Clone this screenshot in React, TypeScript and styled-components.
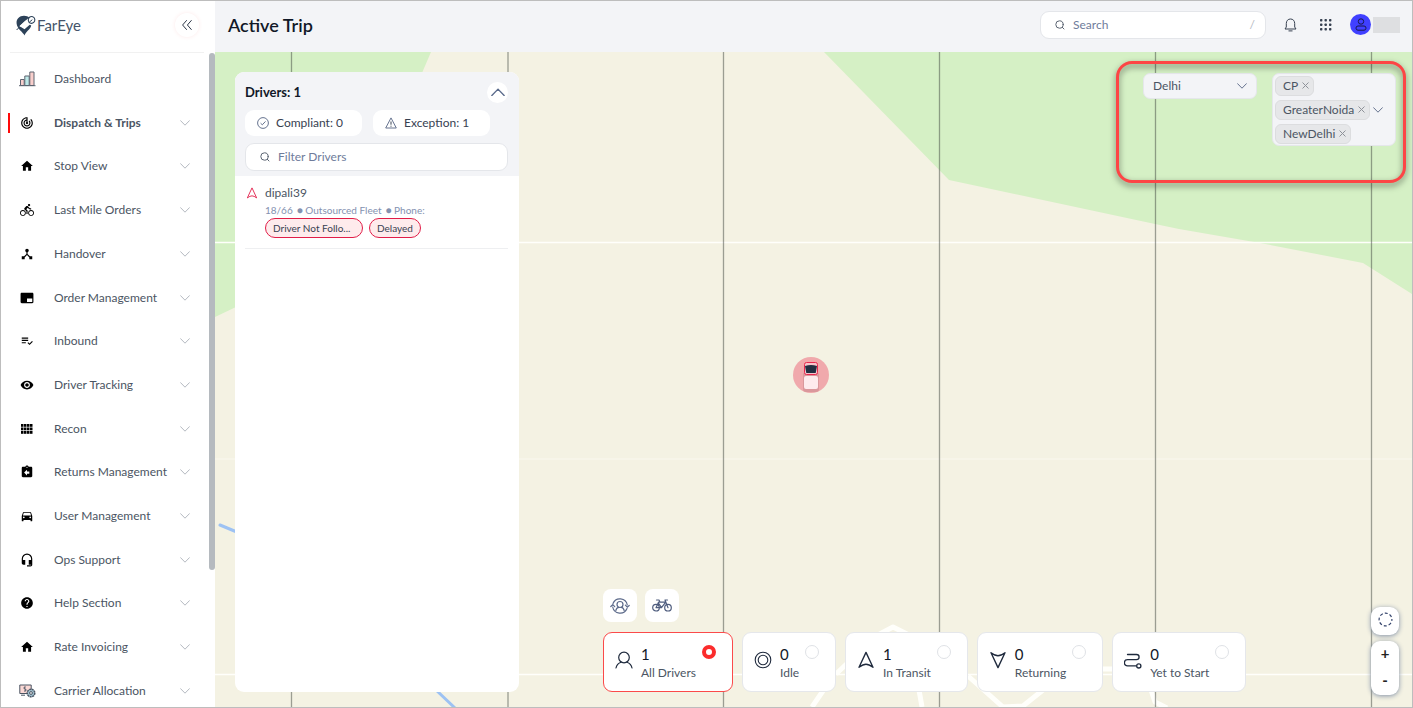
import React from "react";
import styled, { createGlobalStyle, css } from "styled-components";
import {
  MdTrackChanges,
  MdHome,
  MdDirectionsBike,
  MdDeviceHub,
  MdBrandingWatermark,
  MdPlaylistAddCheck,
  MdVisibility,
  MdAssignmentReturn,
  MdDirectionsCar,
  MdHeadsetMic,
  MdHelp,
} from "react-icons/md";

const GlobalStyle = createGlobalStyle`
  *, *::before, *::after { box-sizing: border-box; }
  body { margin: 0; }
  body, button, input, select {
    font-family: Lato, "Liberation Sans", sans-serif;
    font-size: 12px;
    line-height: 16px;
    color: #4b5563;
  }
  button { padding: 0; border: 0; background: none; cursor: pointer; }
  ul { margin: 0; padding: 0; list-style: none; }
  h1, h2, p { margin: 0; }
  svg { display: block; flex: none; }
`;

const Shell = styled.div`
  display: flex;
  height: 100vh;
  border: 1px solid #bdbdbd;
  overflow: hidden;
  background: #fff;
`;

/* Sidebar */

const Sidebar = styled.aside`
  flex: none;
  width: 214px;
  display: flex;
  flex-direction: column;
`;

const SidebarHead = styled.div`
  display: flex;
  align-items: center;
  justify-content: space-between;
  height: 52px;
  margin: 0 11px 0 9px;
  padding: 0 5px 3px 6px;
  border-bottom: 1px solid #f1f1f1;
`;

const Logo = styled.a`
  display: flex;
  align-items: center;
  gap: 1px;
  color: #44546a;
  text-decoration: none;
  font-size: 15px;
`;

const CollapseButton = styled.button`
  display: grid;
  place-items: center;
  width: 24px;
  height: 24px;
  border-radius: 50%;
  background: #fff;
  box-shadow: 0 0 4px #fdeaea;
`;

const SidebarBody = styled.nav`
  flex: 1;
  min-height: 0;
  display: flex;
`;

const MenuList = styled.ul`
  flex: 1;
  display: flex;
  flex-direction: column;
  justify-content: space-between;
  padding: 16px 0 6px 7px;
`;

const MenuLink = styled.a<{ $active?: boolean }>`
  display: grid;
  grid-template-columns: 35px 1fr 10px;
  align-items: center;
  height: 20px;
  padding: 0 19px 0 9px;
  border-left: 2px solid ${(p) => (p.$active ? "#ff0a0a" : "transparent")};
  color: #4b5563;
  font-weight: ${(p) => (p.$active ? 700 : 400)};
  text-decoration: none;
  white-space: nowrap;
`;

const MenuIcon = styled.span`
  display: flex;
  justify-content: center;
  width: 16px;
  color: #000;
  font-size: 14px;
`;

const ScrollThumb = styled.div`
  width: 6px;
  height: 79%;
  border-radius: 3px;
  background: #b5babf;
`;

/* Top bar */

const Main = styled.main`
  flex: 1;
  min-width: 0;
  display: flex;
  flex-direction: column;
`;

const TopBar = styled.header`
  display: flex;
  align-items: center;
  height: 51px;
  padding: 0 12px 4px 13px;
  background: #f3f4f7;
`;

const PageTitle = styled.h1`
  flex: 1;
  font-size: 18px;
  line-height: 24px;
  font-weight: 600;
  color: #111827;
`;

const SearchBox = styled.label<{ $fill?: boolean }>`
  display: flex;
  align-items: center;
  gap: 8px;
  width: ${(p) => (p.$fill ? "100%" : "226px")};
  height: 28px;
  padding: 0 10px 0 14px;
  border: 1px solid #e4e6ea;
  border-radius: 9px;
  background: #fff;
  color: #b4b9c2;

  input {
    flex: 1;
    min-width: 0;
    padding: 0;
    border: 0;
    outline: 0;
    background: none;
  }
  input::placeholder { color: #6f7c9b; opacity: 1; }
`;

const BarButton = styled.button<{ $gap: number }>`
  display: grid;
  place-items: center;
  width: 16px;
  height: 20px;
  margin-left: ${(p) => p.$gap}px;
`;

const Account = styled.button`
  display: flex;
  align-items: center;
  gap: 2px;
  margin-left: 16px;
`;

const Avatar = styled.span`
  display: grid;
  place-items: center;
  width: 21px;
  height: 21px;
  border-radius: 50%;
  background: #4040ff;
`;

const AccountName = styled.span`
  width: 27px;
  height: 16px;
  background: #dedfe1;
`;

/* Map */

const MapArea = styled.section`
  position: relative;
  flex: 1;
  min-height: 0;
  display: flex;
  padding: 20px 0 15px 20px;
  background: #f4f2e3;
`;

const MapCanvas = styled.svg`
  position: absolute;
  inset: 0;
  width: 100%;
  height: 100%;
`;

const DriverPanel = styled.section`
  position: relative;
  flex: none;
  width: 284px;
  border-radius: 9px;
  background: #fff;
  overflow: hidden;
`;

const PanelHead = styled.div`
  padding: 9px 11px 5px 10px;
  background: #f3f4f7;
`;

const PanelTitleRow = styled.div`
  display: flex;
  align-items: center;
  justify-content: space-between;
  height: 22px;
`;

const PanelTitle = styled.h2`
  font-size: 13px;
  line-height: 16px;
  font-weight: 700;
  color: #111827;
`;

const RoundButton = styled.button`
  display: grid;
  place-items: center;
  width: 21px;
  height: 21px;
  border-radius: 50%;
  background: #fff;
`;

const ChipRow = styled.div`
  display: flex;
  gap: 11px;
  padding: 7px 0;
`;

const StatusChip = styled.button`
  display: flex;
  align-items: center;
  gap: 7px;
  width: 117px;
  height: 26px;
  padding: 0 12px;
  border-radius: 9px;
  background: #fff;
  color: #374151;
`;

const DriverItem = styled.li`
  display: grid;
  grid-template-columns: 20px 1fr;
  margin: 0 11px 0 10px;
  padding: 8px 0 10px;
  border-bottom: 1px solid #eeeff1;

  > svg { margin: 3px 0 0 1px; }
`;

const DriverName = styled.p`
  line-height: 18px;
`;

const DriverMeta = styled.p`
  display: flex;
  gap: 4px;
  font-size: 10px;
  line-height: 16px;
  color: #8391b0;
`;

const BadgeRow = styled.div`
  display: flex;
  gap: 6px;
`;

const Badge = styled.span<{ $long?: boolean }>`
  min-width: ${(p) => (p.$long ? "98px" : "0")};
  height: 20px;
  padding: 0 7px;
  border: 1px solid #e11d48;
  border-radius: 10px;
  background: #feebec;
  color: #374151;
  font-size: 10px;
  line-height: 18px;
  white-space: nowrap;
`;

const FleetBar = styled.div`
  position: relative;
  display: flex;
  flex-direction: column;
  justify-content: flex-end;
  gap: 10px;
  margin-left: 84px;
`;

const ModeRow = styled.div`
  display: flex;
  gap: 8px;
`;

const ModeButton = styled.button`
  display: grid;
  place-items: center;
  width: 34px;
  height: 33px;
  border-radius: 8px;
  background: #fff;
`;

const StatRow = styled.div`
  display: flex;
  gap: 9px;
`;

const StatCard = styled.label<{ $active?: boolean }>`
  display: flex;
  align-items: center;
  height: 60px;
  padding: 0 16px 0 11px;
  border: 1px solid ${(p) => (p.$active ? "#fb4a4a" : "#e5e7eb")};
  border-radius: 9px;
  background: #fff;
  white-space: nowrap;

  > svg { margin: 0 8px 4px 0; }
`;

const StatText = styled.span`
  display: flex;
  flex-direction: column;
  margin-right: 6px;
  padding-top: 2px;
  line-height: 18px;
`;

const StatCount = styled.span`
  font-size: 15px;
  line-height: 20px;
  color: #111827;
`;

const StatRadio = styled.input`
  appearance: none;
  align-self: flex-start;
  width: 14px;
  height: 14px;
  margin: 12px 0 0;
  border: 1px solid #dfe2e6;
  border-radius: 50%;
  background: #fff;

  &:checked { border: 4px solid #fb2c2c; }
`;

const floating = css`
  border-radius: 9px;
  background: #fff;
  box-shadow: 0 1px 5px #8492a8;
`;

const MapControls = styled.div`
  position: absolute;
  right: 13px;
  bottom: 12px;
  display: flex;
  flex-direction: column;
  gap: 6px;
  width: 28px;
`;

const LocateButton = styled.button`
  ${floating}
  display: grid;
  place-items: center;
  height: 28px;
  padding-bottom: 3px;
`;

const ZoomGroup = styled.div`
  ${floating}
  display: grid;
  grid-template-rows: 1fr 1fr;
  height: 54px;

  button { padding-bottom: 4px; font-size: 15px; color: #222; font-weight: 700; }
`;

const FilterBar = styled.div`
  position: absolute;
  top: 21px;
  right: 16px;
  display: flex;
  align-items: flex-start;
  gap: 15px;
`;

const CitySelect = styled.div`
  display: grid;
  align-items: center;
  width: 114px;
  height: 26px;
  border: 1px solid #e5e7eb;
  border-radius: 7px;
  background: #f3f4f7;

  > * { grid-area: 1 / 1; }
  svg { justify-self: end; margin-right: 9px; pointer-events: none; }
  select {
    appearance: none;
    width: 100%;
    height: 100%;
    padding: 0 9px;
    border: 0;
    background: none;
  }
`;

const HubSelect = styled.div`
  display: flex;
  align-items: center;
  gap: 3px;
  width: 124px;
  height: 73px;
  padding: 0 2px;
  border: 1px solid #e5e7eb;
  border-radius: 7px;
  background: #f3f4f7;
`;

const TagList = styled.ul`
  display: grid;
  justify-items: start;
  gap: 4px;
`;

const Tag = styled.li`
  display: flex;
  align-items: center;
  gap: 4px;
  height: 20px;
  padding: 0 4px 0 7px;
  border: 1px solid #dcdddf;
  border-radius: 6px;
  background: #e6e7e9;
`;

const Highlight = styled.div`
  position: absolute;
  top: 9px;
  right: 6px;
  width: 290px;
  height: 122px;
  border: 3px solid #fd4545;
  border-radius: 16px;
  filter: drop-shadow(0 3px 3px #0008);
  pointer-events: none;
`;

/* Small line icons */

const Chevron = ({ up, size = 10, color = "#b4b9c0" }: { up?: boolean; size?: number; color?: string }) => (
  <svg width={size} height={size * 0.6} viewBox="0 0 10 6" fill="none" stroke={color} strokeLinecap="round" strokeLinejoin="round">
    <path d={up ? "M.6 5.3 5 .8l4.4 4.5" : "M.6.7 5 5.2 9.4.7"} />
  </svg>
);

const SearchIcon = () => (
  <svg width="10" height="10" viewBox="0 0 10 10" fill="none" stroke="#5b6472" strokeLinecap="round">
    <circle cx="4.5" cy="4.5" r="3.7" />
    <path d="M7.3 7.3 9 9" />
  </svg>
);

const ArrowIcon = ({ size, color, down }: { size: number; color: string; down?: boolean }) => (
  <svg width={size} height={size} viewBox="0 0 16 16" fill="none" stroke={color} strokeWidth="1.2" strokeLinejoin="round">
    {down ? (
      <path d="M8 14.8 1.800 1.500Q5.500 4.200 8 4.200T14.200 1.500z" />
    ) : (
      <path d="M8 1.200 1.800 14.500Q5.500 11.800 8 11.800T14.200 14.500z" />
    )}
  </svg>
);

const CrossIcon = () => (
  <svg width="7" height="7" viewBox="0 0 7 7" fill="none" stroke="#8e9299">
    <path d="M.5.5l6 6M6.5.5l-6 6" />
  </svg>
);

const LogoMark = () => (
  <svg width="20" height="21" viewBox="0 0 20 21">
    <path d="M8.500 20.500C7.500 17.500 1 14 .6 8.500.2 4 3.500.8 8 .8c2.500 0 4 .7 5.200 1.800l-4.700 4L3.500 11l5 3.300 5.200-4.500 1.500.8C14.500 14.500 9.500 17 8.500 20.500z" fill="#2d4259" />
    <path d="M13.500 2.200c2-1.600 5-.4 5.300 2.200.3 2.400-1.800 4.400-4.100 3.900-2.600-.5-3.300-4.400-1.200-6.100z" fill="#fff" stroke="#2d4259" strokeWidth="1.100" />
    <path d="M3.500 11.300 9.700 5.500l3 3.300-4.200 4.500z" fill="#fff" />
    <path d="M.6 15l3-3M13.500 7l2.800-2.300" stroke="#2d4259" fill="none" />
  </svg>
);

const DashboardIcon = () => (
  <svg width="17" height="16" viewBox="0 0 17 16" stroke="#5d6470">
    <path d="M1.5 8.500h3.700v6H1.500z" fill="#f9cfcc" />
    <path d="M5.800 5h4.400v9.500H5.800z" fill="#bfe9e8" />
    <path d="M10.800 1h4.200v13.500h-4.200z" fill="#f9cfcc" />
    <path d="M0 14.700h16.500" />
  </svg>
);

const GridIcon = () => (
  <svg width="12" height="10" viewBox="0 0 12 10" fill="#000">
    {[0, 3.5, 7].map((y) => [0, 3, 6, 9].map((x) => <rect key={`${x}-${y}`} x={x} y={y} width="2.500" height="2.800" />))}
  </svg>
);

const CarrierIcon = () => (
  <svg width="17" height="14" viewBox="0 0 17 14" fill="none" stroke="#4b5563">
    <path d="M.8 1h11.400v8.500H.8z" fill="#fbd9d5" />
    <path d="M6.800 3H5.200v2h1.600v2H5M2 11.200h4" />
    <circle cx="12" cy="9" r="3.800" fill="#9fc0cf" strokeWidth="1.500" strokeDasharray="2 .6" />
    <circle cx="12" cy="9" r="1.400" fill="#fff" />
  </svg>
);

type MenuEntry = { label: string; icon: React.ReactNode; active?: boolean; leaf?: boolean };

const menu: MenuEntry[] = [
  { label: "Dashboard", icon: <DashboardIcon />, leaf: true },
  { label: "Dispatch & Trips", icon: <MdTrackChanges />, active: true },
  { label: "Stop View", icon: <MdHome /> },
  { label: "Last Mile Orders", icon: <MdDirectionsBike /> },
  { label: "Handover", icon: <MdDeviceHub /> },
  { label: "Order Management", icon: <MdBrandingWatermark /> },
  { label: "Inbound", icon: <MdPlaylistAddCheck /> },
  { label: "Driver Tracking", icon: <MdVisibility /> },
  { label: "Recon", icon: <GridIcon /> },
  { label: "Returns Management", icon: <MdAssignmentReturn /> },
  { label: "User Management", icon: <MdDirectionsCar /> },
  { label: "Ops Support", icon: <MdHeadsetMic /> },
  { label: "Help Section", icon: <MdHelp /> },
  { label: "Rate Invoicing", icon: <MdHome /> },
  { label: "Carrier Allocation", icon: <CarrierIcon /> },
];

const ink = "#1f2a3d";

const stats = [
  {
    label: "All Drivers",
    count: 1,
    icon: (
      <svg width="18" height="18" viewBox="0 0 18 18" fill="none" stroke={ink} strokeWidth="1.2" strokeLinecap="round">
        <circle cx="9" cy="6.5" r="5.3" />
        <path d="M1 17c.6-3 2.400-5 5-5.800M17 17c-.6-3-2.400-5-5-5.800" />
      </svg>
    ),
  },
  {
    label: "Idle",
    count: 0,
    icon: (
      <svg width="18" height="18" viewBox="0 0 18 18" fill="none" stroke={ink} strokeWidth="1.1">
        <circle cx="9" cy="9" r="7.8" />
        <circle cx="9" cy="9" r="4.8" />
      </svg>
    ),
  },
  { label: "In Transit", count: 1, icon: <ArrowIcon size={18} color={ink} /> },
  { label: "Returning", count: 0, icon: <ArrowIcon size={18} color={ink} down /> },
  {
    label: "Yet to Start",
    count: 0,
    icon: (
      <svg width="18" height="18" viewBox="0 0 18 18" fill="none" stroke={ink} strokeWidth="1.3" strokeLinecap="round">
        <path d="M3.500 3.500h9a2.600 2.600 0 0 1 0 5.200h-9a3.100 3.100 0 0 0 0 6.200h8.700" />
        <circle cx="14.800" cy="14.900" r="2.100" />
      </svg>
    ),
  },
];

const meridians = [291.5, 508, 723.5, 939.5, 1155.5, 1371.5];

function MapDrawing() {
  return (
    <MapCanvas viewBox="215 52 1197 655" preserveAspectRatio="xMinYMin slice" aria-hidden="true">
      <path d="M215 52h216l-12 28-183 227-21 10z" fill="#d5f0c5" />
      <path d="M824 52 949 180 1155 224 1179 229 1260 243 1363 263 1412 294V52z" fill="#d5f0c5" />
      <g stroke="#fffffb" fill="none">
        <path d="M215 242.500h1197M215 674.500h1197" strokeWidth="1.500" />
        <path d="M215 459h1197" opacity=".5" />
        <path
          d="M812 707l15-22M836 674l40-38 17-9 24 12M919 690l3 17M968 676l35 31 20-1 20-16M1100 669h20M1151 690l4 12 12 6"
          strokeWidth="5"
          strokeLinejoin="round"
        />
      </g>
      <g fill="none" stroke="#9dc2f3" strokeWidth="3" strokeLinecap="round">
        <path d="M220 525l24 10M436 690l19 18" />
      </g>
      <g stroke="#414741" strokeOpacity=".5" strokeWidth="1.3">
        {meridians.map((x) => (
          <path key={x} d={`M${x} 52v655`} />
        ))}
      </g>
      <circle cx="811" cy="375" r="18" fill="#f0a9ac" />
      <rect x="803" y="372" width="16" height="20" rx="3" fill="#c98a90" opacity=".55" />
      <rect x="804" y="376" width="14" height="13" rx="2" fill="#feebed" />
      <rect x="804.500" y="362.500" width="13" height="12" rx="2" fill="#f6c4cb" stroke="#e8284f" />
      <path d="M805 366q6-2 12 0l-1.300 7h-9.400z" fill="#232f42" />
    </MapCanvas>
  );
}

export default function App() {
  return (
    <>
      <GlobalStyle />
      <Shell>
        <Sidebar>
          <SidebarHead>
            <Logo href="#">
              <LogoMark />
              FarEye
            </Logo>
            <CollapseButton aria-label="Collapse menu">
              <svg width="10" height="10" viewBox="0 0 10 10" fill="none" stroke="#2d3748" strokeLinecap="round" strokeLinejoin="round">
                <path d="M4.500.5.600 5l3.900 4.500M9.300.5 5.400 5l3.900 4.500" />
              </svg>
            </CollapseButton>
          </SidebarHead>
          <SidebarBody aria-label="Main menu">
            <MenuList>
              {menu.map((item) => (
                <li key={item.label}>
                  <MenuLink href="#" $active={item.active}>
                    <MenuIcon>{item.icon}</MenuIcon>
                    <span>{item.label}</span>
                    {!item.leaf && <Chevron />}
                  </MenuLink>
                </li>
              ))}
            </MenuList>
            <ScrollThumb />
          </SidebarBody>
        </Sidebar>

        <Main>
          <TopBar>
            <PageTitle>Active Trip</PageTitle>
            <SearchBox>
              <SearchIcon />
              <input type="text" placeholder="Search" aria-label="Search" />
              /
            </SearchBox>
            <BarButton $gap={16} aria-label="Notifications">
              <svg width="13" height="14" viewBox="0 0 13 14" fill="none" stroke="#374151" strokeLinejoin="round">
                <path d="M1 11h11l-1.300-2V5.500C10.700 2.800 9 1 6.500 1S2.300 2.800 2.300 5.500V9zM4.500 12.900h4" />
              </svg>
            </BarButton>
            <BarButton $gap={20} aria-label="Apps">
              <svg width="12" height="12" viewBox="0 0 12 12" fill="#374151">
                {[0, 4.5, 9].map((y) => [0, 4.5, 9].map((x) => <rect key={`${x}-${y}`} x={x} y={y} width="2.400" height="2.400" rx=".7" />))}
              </svg>
            </BarButton>
            <Account aria-label="Account">
              <Avatar>
                <svg width="12" height="13" viewBox="0 0 12 13" fill="none" stroke="#17174f">
                  <circle cx="6" cy="3.500" r="2.700" />
                  <rect x="1" y="8" width="10" height="4.200" rx="2" />
                </svg>
              </Avatar>
              <AccountName />
            </Account>
          </TopBar>

          <MapArea>
            <MapDrawing />
            <DriverPanel>
              <PanelHead>
                <PanelTitleRow>
                  <PanelTitle>Drivers: 1</PanelTitle>
                  <RoundButton aria-label="Collapse drivers">
                    <Chevron up size={14} color="#5b6b8c" />
                  </RoundButton>
                </PanelTitleRow>
                <ChipRow>
                  <StatusChip>
                    <svg width="12" height="12" viewBox="0 0 12 12" fill="none" stroke="#66738f">
                      <circle cx="6" cy="6" r="5.400" />
                      <path d="M3.600 6.200l1.700 1.600 3.200-3.400" />
                    </svg>
                    Compliant: 0
                  </StatusChip>
                  <StatusChip>
                    <svg width="12" height="12" viewBox="0 0 12 12" fill="none" stroke="#66738f" strokeLinejoin="round">
                      <path d="M6 .9.7 11h10.600z" />
                      <path d="M6 4.500v3.200M6 8.700v1" stroke="#374151" />
                    </svg>
                    Exception: 1
                  </StatusChip>
                </ChipRow>
                <SearchBox $fill>
                  <SearchIcon />
                  <input type="text" placeholder="Filter Drivers" aria-label="Filter Drivers" />
                </SearchBox>
              </PanelHead>
              <ul>
                <DriverItem>
                  <ArrowIcon size={12} color="#e11d48" />
                  <div>
                    <DriverName>dipali39</DriverName>
                    <DriverMeta>
                      <span>18/66</span>
                      <span>● Outsourced Fleet</span>
                      <span>● Phone:</span>
                    </DriverMeta>
                    <BadgeRow>
                      <Badge $long>Driver Not Follo...</Badge>
                      <Badge>Delayed</Badge>
                    </BadgeRow>
                  </div>
                </DriverItem>
              </ul>
            </DriverPanel>

            <FleetBar>
              <ModeRow>
                <ModeButton aria-label="Reassign driver">
                  <svg width="20" height="18" viewBox="0 0 20 18" fill="none" stroke="#5c6a8a" strokeWidth="1.200" strokeLinecap="round">
                    <path d="M3 6.500A7.500 7.500 0 0 1 17.300 8M17 11.500A7.500 7.500 0 0 1 2.700 10M.8 9.500l2-1.800 1.900 2M15.400 8.200l1.900 2 1.900-1.700" />
                    <circle cx="10" cy="7.500" r="3" />
                    <path d="M5.800 13.500c.5-2 1.600-3 3-3.200M14.200 13.500c-.5-2-1.600-3-3-3.200" />
                  </svg>
                </ModeButton>
                <ModeButton aria-label="Bike">
                  <svg width="20" height="13" viewBox="0 0 20 13" fill="none" stroke="#4f5d7e" strokeWidth="1.200" strokeLinecap="round" strokeLinejoin="round">
                    <circle cx="4" cy="8.700" r="3.300" />
                    <circle cx="16" cy="8.700" r="3.300" />
                    <path d="M4 8.700 6.500 3.200h7.200M6.300 3.800 9.500 8.700H4M9.500 8.700l4.200-5.500M16 8.700 13 1h2.500M4.500 1H7l1 2.200" />
                  </svg>
                </ModeButton>
              </ModeRow>
              <StatRow role="radiogroup" aria-label="Driver status">
                {stats.map((s, i) => (
                  <StatCard key={s.label} $active={i === 0}>
                    {s.icon}
                    <StatText>
                      <StatCount>{s.count}</StatCount>
                      {s.label}
                    </StatText>
                    <StatRadio type="radio" name="status" defaultChecked={i === 0} />
                  </StatCard>
                ))}
              </StatRow>
            </FleetBar>

            <FilterBar>
              <CitySelect>
                <select aria-label="City" defaultValue="Delhi">
                  <option>Delhi</option>
                </select>
                <Chevron color="#66738f" />
              </CitySelect>
              <HubSelect>
                <TagList>
                  {["CP", "GreaterNoida", "NewDelhi"].map((hub) => (
                    <Tag key={hub}>
                      {hub}
                      <button aria-label={`Remove ${hub}`}>
                        <CrossIcon />
                      </button>
                    </Tag>
                  ))}
                </TagList>
                <button aria-label="Show hubs">
                  <Chevron color="#66738f" />
                </button>
              </HubSelect>
            </FilterBar>
            <Highlight />

            <MapControls>
              <LocateButton aria-label="Locate">
                <svg width="15" height="15" viewBox="0 0 15 15" fill="none" stroke="#33436b" strokeWidth="1.200">
                  <circle cx="7.500" cy="7.500" r="6.400" strokeDasharray="3 2.026" strokeDashoffset="1.500" />
                </svg>
              </LocateButton>
              <ZoomGroup>
                <button aria-label="Zoom in">+</button>
                <button aria-label="Zoom out">-</button>
              </ZoomGroup>
            </MapControls>
          </MapArea>
        </Main>
      </Shell>
    </>
  );
}
